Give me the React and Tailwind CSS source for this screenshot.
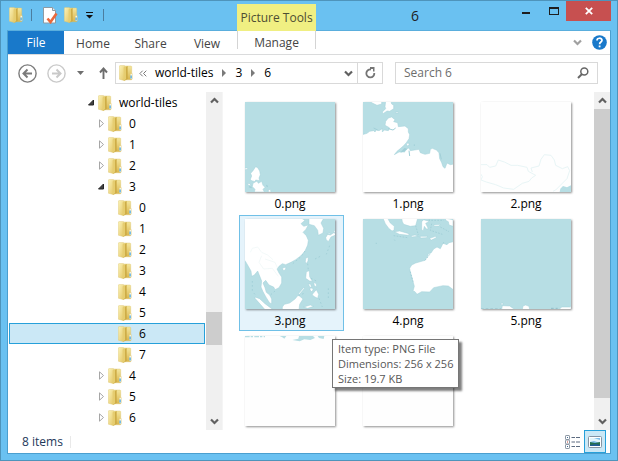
import React from 'react';

const FONT = "font-['Open_Sans','Noto_Sans',sans-serif]";
const WATER = '#b7dee4';
const COAST = '#a2d0d8';

function FolderIcon({ className = 'w-[14px] h-4' }) {
  return (
    <svg viewBox="0 0 14 16" className={`${className} shrink-0`} aria-hidden="true">
      <defs>
        <linearGradient id="folderFace" x1="0" y1="0" x2="1" y2="1">
          <stop offset="0" stopColor="#fbf3b8" />
          <stop offset="1" stopColor="#e3c564" />
        </linearGradient>
        <linearGradient id="folderBack" x1="0" y1="0" x2="0" y2="1">
          <stop offset="0" stopColor="#f4e69c" />
          <stop offset="1" stopColor="#d8b54e" />
        </linearGradient>
      </defs>
      <path d="M5 1h7.200l.5.6V8l.5.8V14l-.7.800H5z" fill="url(#folderBack)" stroke="#dcc26c" strokeWidth=".4" />
      <path d="M.3 1 1 .4h4l1 .8V15.800L.3 14.200z" fill="url(#folderFace)" stroke="#dcc370" strokeWidth=".4" />
      <path d="M5.600 2.400 8.600 1v13l-3 1.600z" fill="#c9a63e" />
      <path d="M4.600 2.600 7.200 1.400v12.800l-2.600 1.200z" fill="#e6cd70" />
      <path d="M11.500 8.800h1.600v5.200h-1.600z" fill="#f7f5e2" />
      <path d="M11.500 10.500h1.200v3h-1.200z" fill="#3ba2e6" />
    </svg>
  );
}

function Chevron({ up = false, color = '#606060' }) {
  return (
    <svg viewBox="0 0 9 7" className="h-[7px] w-[9px] shrink-0" aria-hidden="true">
      <path d={up ? 'M1 5.5 4.5 2 8 5.5' : 'M1 1.5 4.5 5 8 1.5'} fill="none" stroke={color} strokeWidth="2.2" />
    </svg>
  );
}

function Land({ d, stroke = COAST }) {
  return <path d={d} fill="#fff" stroke={stroke} strokeWidth="1.5" strokeLinejoin="round" />;
}

const TILES = {
  '0.png': (
    <>
      <rect width="270" height="270" fill={WATER} />
      <Land d="M28 200 32 194 38 197 44 207 46 218 42 228 44 236 32 234 30 239 20 236 16 232 20 222 17 214 24 206Z" />
      <Land d="M24 244 36 237 40 244 50 238 54 250 60 256 54 262 58 270H28l2-8-8-8Z" />
      <Land d="M0 198h7l2 3-6 2H0ZM6 244l8 1 5 6-8-1ZM70 264l6-2 2 8h-8Z" />
      <path d="M12 254l8 3M64 250l4 4" stroke={COAST} strokeWidth="4" />
    </>
  ),
  '1.png': (
    <>
      <rect width="270" height="270" fill={WATER} />
      <Land d="M-2 98 12 94 20 88 32 86 36 90 40 84 48 86 58 80 58 90 64 84 76 86 80 78 74 74 66 70 68 58 76 48 86 45 96 53 92 59 104 62 106 74 126 72 136 80 136 90 140 98 138 110 130 122 120 133 102 148 94 158 108 150 126 150 124 142 138 138 142 146 168 142 172 152 186 157 200 154 202 142 208 139 220 144 228 152 230 170 236 182 240 194 246 199 252 183 262 188 272 186V272H-2Z" />
      <Land d="M68-2h16l2 8 6 4v10l-12 8-8-1-12 8-2-5 10-10-2-6ZM24-2h32v8l-14 4-16-8Z" />
      <Land d="M130 124h8v6l-6 2ZM98 30h8v3h-8Z" />
      <path d="M76 80l14 4 8-6M154 127v5M32 78l12 6M138 146l2 16M231 154l4 18" fill="none" stroke={COAST} strokeWidth="3" />
      <path d="M124 138l10 2-6 6-16 6Z" fill={COAST} />
    </>
  ),
  '2.png': (
    <>
      <rect width="270" height="270" fill="#fefefe" />
      <path d="M0 188h18l8 8 18-4 8-18 18 6 20 10h20l28 6 4 12 22 12-12 8-8 10-20 6-26 18-30-4-24-10-28-8-16-6 4-10-8-14M154 210l-4-12 24-6 6-20 10-14 20 2 10 14 4 16 20 10 16-6 6 12-8 24-20 20-14 14-8 4" fill="none" stroke="#e8f5f6" strokeWidth="3" />
      <path d="M236 270l2-10 8-8 12 4 12-6v20Z" fill={WATER} />
    </>
  ),
  '3.png': (
    <>
      <rect width="270" height="270" fill={WATER} />
      <Land d="M-2-2H170l10 6-12 10 8 8 14-4-8 14-8 8 10 10 6 14-2 14-8 18-12 14-16 12-14 8-16 7-10-3-10 8-6 8 6 12 8 12v18l-8 14-12 6-4-8-14-6-10-14-8 8 6 14 4 14 10 8 6 12v14l-6-2-10-16-10-18-6-14 2-18-8-20-4-10-10 12-8 4-2-16-8-14-8-14-6-8Z" />
      <Land d="M192-2h44l-8 14 8 16-2 14-14 7-2-15-10-14-16-4Z" />
      <Land d="M242 56l6-10 8 2 12-8 4 8-14 6-8 14-6-6ZM246 44l10-2v4h-10ZM266 36l6-2v6h-6Z" />
      <Land d="M182 118l8-4-1 12-5 8-3-6ZM112 148l10-4v6l-6 6ZM184 158l9-3 1 18 8 14-8-1-12-8Z" />
      <Land d="M160 224l16-18 3 2-16 18ZM190 194l7 2 3 10-6-2ZM206 190l8 4 1 10-7-4ZM196 206l9 3-4 10-6-6ZM202 226l12-14 7 14-3 12-8-4-6-4Z" />
      <Land d="M112 264l6-8 16-4 16-12 10-12 14 12-10 16-2 16h-50ZM30 234l14 5 16 15 24 18H60l-14-16-16-18ZM176 264l20-6 10 4-18 6Z" />
      <path d="M16 100l6-12 16-4 12 16 18 8 16 14M50 110l-8 20 14 20 26-2 18 24M60 120l30 10 8 18" fill="none" stroke="#edf6f6" strokeWidth="2" />
      <path d="M210 120l20-10M254 80l-10 26M22 186v30M188 134l2 20M198 178l20 10M160 230l20-8M222 238l10 26M90 216l-16 14M180 96l-12 17-26 22M30 226l-8-8M250 208v30" fill="none" stroke={COAST} strokeWidth="3" strokeDasharray="5 7" />
    </>
  ),
  '4.png': (
    <>
      <rect width="270" height="270" fill={WATER} />
      <Land d="M272 68l-14 3-6 6-12-4-8 16-10-5-10 6-8 12-8 2-2 8-8 12-28 8-12 6-6 10 2 12 6 20 6 22-4 14 6 2 6 8 14-8 24 1 12-13 28-6 16 1 16 12Z" />
      <Land d="M60-2h14l8 14 12 10-1 12-6 2-10-8-10-14ZM116-2h48l-6 22-16 2-20-6-4-8ZM94 38l16-2 28 8-1 5-28-3Z" />
      <Land d="M176 8l6-6 12 4 6-6-4 9-8 4 8 16-6 1-6-8-3 13-5-2Z" />
      <Land d="M144 50l12-2 10 4-20 2ZM172 52h22l-4 4-18 1ZM200 58l18-6 2 4-16 8ZM248-2l22 4v20l-12-4-2-10-8-4ZM212 18l20-2-4 5-14 1Z" />
      <path d="M196 4h46M206 14l-4 20 36 12M232 24l26 14M92 50l42 6M142 158l8 30M186 124l16-20M240 74l4-8M38 73h4M94 62l2 3M158 20l8 28" fill="none" stroke={COAST} strokeWidth="3" strokeDasharray="5 4" />
    </>
  ),
  '5.png': (
    <>
      <rect width="270" height="270" fill={WATER} />
      <Land d="M62 272l2-12 22 1 16 11ZM124 272l2-11 8-3 10 4 2 10ZM234 272l8-8h24l4-3v11ZM60 253l6-1v5h-6Z" />
      <path d="M0 270h60M210 268h20" stroke="#90bdc9" strokeWidth="3" strokeDasharray="8 6" />
    </>
  ),
  '6.png': (
    <>
      <rect width="270" height="270" fill="#fefefe" />
      <path d="M142 12l18-4 2-8h42l6 6-14 6-18-2-14 6ZM104 0h20l-6 8-6-4ZM218 0h20l-2 9-14-3Z" fill={WATER} />
      <path d="M0 2h60" stroke={WATER} strokeWidth="4" strokeDasharray="14 3 7 4" />
    </>
  ),
  '7.png': <rect width="270" height="270" fill="#fefefe" />,
};

const UNCAPTIONED = ['6.png', '7.png'];

const TREE = [
  ['world-tiles', 1, 'open'],
  ['0', 2, 'closed'],
  ['1', 2, 'closed'],
  ['2', 2, 'closed'],
  ['3', 2, 'open'],
  ['0', 3],
  ['1', 3],
  ['2', 3],
  ['3', 3],
  ['4', 3],
  ['5', 3],
  ['6', 3],
  ['7', 3],
  ['4', 2, 'closed'],
  ['5', 2, 'closed'],
  ['6', 2, 'closed'],
];

const INDENT = { 1: 'pl-[77px]', 2: 'pl-[87px]', 3: 'pl-[97px]' };

function TreeRow({ name, level, state, selected }) {
  return (
    <li>
      <button
        type="button"
        aria-current={selected ? 'true' : undefined}
        className={`flex h-[21px] w-full items-center border ${INDENT[level]} ${
          selected ? 'border-[#26a0da] bg-[#cbe8f6]' : 'border-transparent'
        }`}
      >
        <svg viewBox="0 0 11 9" className="h-[9px] w-[11px] shrink-0" aria-hidden="true">
          {state === 'open' && <path d="M1.5 7h5V2z" fill="#404040" stroke="#262626" />}
          {state === 'closed' && <path d="M2.5 .8v7.4L6.500 4.500z" fill="#fff" stroke="#a6a6a6" />}
        </svg>
        <FolderIcon />
        <span className="ml-[7px]">{name}</span>
      </button>
    </li>
  );
}

function TreeScrollbar() {
  return (
    <div className="flex w-4 shrink-0 flex-col items-center bg-[#f0f0f0]">
      <button type="button" aria-label="Scroll tree up" className="flex h-[17px] items-center"><Chevron up /></button>
      <div className="grow-[203]" />
      <div className="h-[33px] w-full bg-[#cdcdcd]" />
      <div className="grow-[68]" />
      <button type="button" aria-label="Scroll tree down" className="flex h-[17px] items-center"><Chevron /></button>
    </div>
  );
}

function FilesScrollbar() {
  return (
    <div className="flex w-4 shrink-0 flex-col items-center bg-[#f0f0f0]">
      <button type="button" aria-label="Scroll files up" className="flex h-[17px] items-center"><Chevron up /></button>
      <div className="w-full grow-[289] bg-[#cdcdcd]" />
      <div className="grow-[15]" />
      <button type="button" aria-label="Scroll files down" className="flex h-[17px] items-center"><Chevron /></button>
    </div>
  );
}

function FileCell({ name }) {
  const hovered = name === '3.png';
  return (
    <li
      className={`relative flex h-[116px] w-[105px] flex-col items-center border pt-[3px] pr-[3px] ${
        hovered ? 'z-10 border-[#70c0e7] bg-[#e5f3fb]' : 'border-transparent'
      }`}
    >
      <svg
        viewBox="0 0 270 270"
        role="img"
        aria-label={`Preview of ${name}`}
        className="size-[90px] shrink-0 shadow-[1px_1px_2px_#00000070]"
      >
        {TILES[name]}
      </svg>
      {!UNCAPTIONED.includes(name) && <span className="mt-1 leading-4">{name}</span>}
      {hovered && (
        <div
          role="tooltip"
          className="absolute top-[123px] left-[92px] border border-[#767676] bg-white px-[5px] py-px text-[11px] leading-[15px] whitespace-nowrap text-[#575757] shadow-[3px_3px_2px_#00000080]"
        >
          <p>Item type: PNG File</p>
          <p>Dimensions: 256 x 256</p>
          <p>Size: 19.7 KB</p>
        </div>
      )}
    </li>
  );
}

function TitleBar() {
  return (
    <header className="flex h-[29px] shrink-0 items-start pl-2">
      <div className="flex h-[28px] items-center">
        <FolderIcon />
        <span className="mx-2 h-3 w-px bg-[#4b7d9f]" />
        <button type="button" aria-label="Properties" className="ml-[2px]">
          <svg viewBox="0 0 16 17" className="h-[17px] w-4" aria-hidden="true">
            <path d="M1.500 .5h9l3 3v12.500h-12z" fill="#fff" stroke="#8d9aa3" />
            <path d="M10.500 .5v3h3" fill="#e5eaee" stroke="#8d9aa3" />
            <path d="M5.500 11.500 8.500 15 14.500 6.500" fill="none" stroke="#e9693d" strokeWidth="2.600" />
          </svg>
        </button>
        <button type="button" aria-label="New folder" className="ml-[6px]"><FolderIcon /></button>
        <button type="button" aria-label="Customize Quick Access Toolbar" className="ml-2">
          <svg viewBox="0 0 7 7" className="size-[7px]" aria-hidden="true">
            <path d="M0 0h7v1H0zM0 3h7L3.500 6.500z" fill="#111" />
          </svg>
        </button>
        <span className="ml-[10px] h-3 w-px bg-[#4b7d9f]" />
      </div>
      <div className="relative mt-[3px] ml-[133px] flex h-[27px] w-[79px] items-center justify-center bg-[#f0ef82] text-[#4d4d33]">
        Picture Tools
      </div>
      <h1 className="mt-1 flex-1 text-center text-sm leading-[22px] text-[#222]">6</h1>
      <div className="flex h-5">
        <button type="button" aria-label="Minimize" className="flex w-[27px] items-center pl-2">
          <span className="mt-1 h-[2px] w-2 bg-[#1e1e1e]" />
        </button>
        <button type="button" aria-label="Maximize" className="flex w-[25px] items-center justify-center">
          <span className="h-2 w-[10px] border border-t-2 border-[#1e1e1e]" />
        </button>
        <button type="button" aria-label="Close" className="mr-[6px] flex w-[45px] items-center justify-center bg-[#c75050]">
          <svg viewBox="0 0 8 8" className="size-2" aria-hidden="true">
            <path d="M.8.8l6.400 6.400M7.200.8.8 7.200" stroke="#fff" strokeWidth="1.800" />
          </svg>
        </button>
      </div>
    </header>
  );
}

function RibbonTabs() {
  return (
    <nav aria-label="Ribbon" className="flex h-6 shrink-0 items-stretch border-b border-[#dadbdc] text-[#444]">
      <button type="button" className="w-14 bg-[#1979ca] text-white">File</button>
      <button type="button" className="w-[58px] pt-[2px]">Home</button>
      <button type="button" className="w-[57px] pt-[2px]">Share</button>
      <button type="button" className="w-[56px] pt-[2px]">View</button>
      <button type="button" className="ml-[2px] h-[18px] w-[79px] border-x border-[#d4d4d4] pt-[6px] leading-3">Manage</button>
      <div className="ml-auto flex items-center gap-[10px] pr-[3px]">
        <button type="button" aria-label="Expand the Ribbon" className="flex"><Chevron color="#a0a0a0" /></button>
        <button type="button" aria-label="Help">
          <svg viewBox="0 0 15 15" className="size-[15px]" aria-hidden="true">
            <circle cx="7.500" cy="7.500" r="7.300" fill="#1979ca" />
            <path d="M5 5.500C5 2.500 10 2.500 10 5.300c0 1.700-2.400 1.800-2.400 3.900" fill="none" stroke="#fff" strokeWidth="1.700" />
            <path d="M6.700 10.500h1.800v1.800H6.700z" fill="#fff" />
          </svg>
        </button>
      </div>
    </nav>
  );
}

function RoundArrow({ label, color, flip = false }) {
  return (
    <button type="button" aria-label={label}>
      <svg viewBox="0 0 19 19" className="size-[19px]" aria-hidden="true">
        <circle cx="9.500" cy="9.500" r="8.600" fill="none" stroke={color} strokeWidth="1.400" />
        <path
          d={flip ? 'M5 9.500h8.500M9.500 5.500l4 4-4 4' : 'M14 9.500H5.500M9.500 5.500l-4 4 4 4'}
          fill="none"
          stroke={color}
          strokeWidth="2"
        />
      </svg>
    </button>
  );
}

function CrumbArrow() {
  return (
    <svg viewBox="0 0 4 8" className="h-2 w-1 shrink-0" aria-hidden="true">
      <path d="M0 0v8l4-4z" fill="#7a7a7a" />
    </svg>
  );
}

function AddressRow() {
  return (
    <div className="flex h-[37px] shrink-0 items-center pr-3 pb-px pl-[10px]">
      <RoundArrow label="Back" color="#7b7b7b" />
      <div className="ml-[10px] flex"><RoundArrow label="Forward" color="#c9c9c9" flip /></div>
      <button type="button" aria-label="Recent locations" className="ml-[11px]">
        <svg viewBox="0 0 7 4" className="h-1 w-[7px]" aria-hidden="true"><path d="M0 0h7L3.500 4z" fill="#6f6f6f" /></svg>
      </button>
      <button type="button" aria-label="Up" className="ml-[15px]">
        <svg viewBox="0 0 9 12" className="h-3 w-[9px]" aria-hidden="true">
          <path d="M4.500 12V2M1 5.500l3.500-4 3.500 4" fill="none" stroke="#6d6d6d" strokeWidth="1.900" />
        </svg>
      </button>
      <div className="ml-[7px] flex h-[22px] flex-1 items-center border border-[#d9d9d9] pl-[3px]">
        <FolderIcon />
        <svg viewBox="0 0 8 7" className="ml-[6px] h-[7px] w-2 shrink-0" aria-hidden="true">
          <path d="M3.700.7.9 3.500l2.800 2.800M7.300.7 4.500 3.500l2.800 2.800" fill="none" stroke="#777" />
        </svg>
        <a href="#world-tiles" className="mr-[9px] ml-2 whitespace-nowrap">world-tiles</a>
        <CrumbArrow />
        <a href="#3" className="mx-[9px]">3</a>
        <CrumbArrow />
        <a href="#6" className="ml-[9px]">6</a>
        <button type="button" aria-label="Previous locations" className="mr-1 ml-auto"><Chevron /></button>
        <button type="button" aria-label="Refresh" className="flex h-full w-[25px] items-center justify-center border-l border-[#d9d9d9]">
          <svg viewBox="0 0 11 12" className="h-3 w-[11px]" aria-hidden="true">
            <path d="M6 2.500A4 4 0 1 0 9.300 6" fill="none" stroke="#757575" strokeWidth="1.800" />
            <path d="M5 0h4.500v4.500H8V2H5z" fill="#757575" />
          </svg>
        </button>
      </div>
      <div className="ml-3 flex h-[22px] w-[35%] items-center border border-[#d9d9d9] px-2">
        <input
          type="search"
          aria-label="Search 6"
          placeholder="Search 6"
          className="w-full min-w-0 outline-none placeholder:text-[#6d6d6d]"
        />
        <svg viewBox="0 0 12 12" className="size-3 shrink-0" aria-hidden="true">
          <circle cx="7.300" cy="4.500" r="3.500" fill="none" stroke="#666" strokeWidth="1.500" />
          <path d="M5 7 1 11" stroke="#666" strokeWidth="2" />
        </svg>
      </div>
    </div>
  );
}

function StatusBar() {
  return (
    <footer className="flex h-[23px] shrink-0 items-center pr-1 pl-[14px] text-[#1e395b]">
      <span>8 items</span>
      <span className="ml-[7px] h-3 w-px bg-[#e9e9e9]" />
      <button type="button" aria-label="Details view" className="mr-1 ml-auto">
        <svg viewBox="0 0 15 14" className="h-[14px] w-[15px]" aria-hidden="true">
          {[0.5, 5, 9.5].map((y, i) => (
            <g key={y}>
              <rect x=".5" y={y} width="4" height="4" rx=".6" fill="#fff" stroke="#8a96a3" />
              <path d={`M2 ${y + 2}h1`} stroke={i === 1 ? '#c43b2b' : '#3f6b94'} />
              <path d={`M6.500 ${y + 2}h3.500M11 ${y + 2}h4`} stroke="#5c6b80" />
            </g>
          ))}
        </svg>
      </button>
      <button
        type="button"
        aria-label="Large icons view"
        aria-pressed="true"
        className="flex h-[23px] w-[22px] items-center justify-center border border-[#26a0da] bg-[#cbe8f6]"
      >
        <svg viewBox="0 0 14 12" className="h-3 w-[14px]" aria-hidden="true">
          <rect x=".5" y=".5" width="13" height="11" rx="1" fill="#fff" stroke="#8494a3" />
          <path d="M2 2h10v8H2z" fill="#7ebde9" />
          <path d="M2 2h4l6 2v3l-6-2-4 1z" fill="#e2f5fb" />
          <path d="M2 6l5 1 5-1v4H2z" fill="#26704f" />
          <path d="M2 9l6-1 4 1v1H2z" fill="#235e94" />
        </svg>
      </button>
    </footer>
  );
}

export default function App() {
  return (
    <div className={`${FONT} flex h-screen flex-col border border-[#4e94bb] bg-[#6ac1f1] text-xs text-black`}>
      <TitleBar />
      <main className="mx-[6px] mb-[6px] flex min-h-0 flex-1 flex-col border border-[#4b9fcf] border-t-[#5aaedd] bg-white">
        <RibbonTabs />
        <AddressRow />
        <div className="flex min-h-0 flex-1">
          <ul aria-label="Folders" className="w-[198px] shrink-0 overflow-hidden px-px">
            {TREE.map(([name, level, state], i) => (
              <TreeRow key={i} name={name} level={level} state={state} selected={level === 3 && name === '6'} />
            ))}
          </ul>
          <TreeScrollbar />
          <div className="min-w-0 flex-1 overflow-hidden border-l border-[#f5f5f5] pt-[6px] pl-4">
            <ul aria-label="Files" className="flex flex-wrap gap-x-[13px] gap-y-px">
              {Object.keys(TILES).map((name) => <FileCell key={name} name={name} />)}
            </ul>
          </div>
          <FilesScrollbar />
        </div>
        <StatusBar />
      </main>
    </div>
  );
}
